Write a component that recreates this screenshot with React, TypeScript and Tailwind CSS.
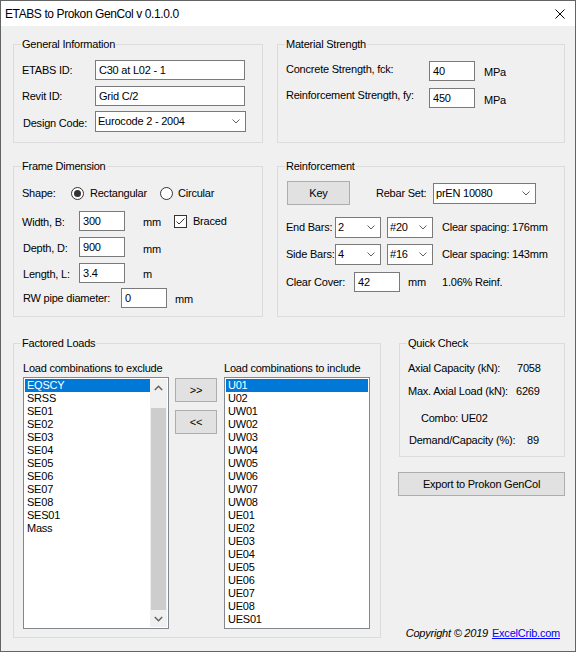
import React from 'react';

function Group({ title, className, children }: { title: string; className: string; children?: React.ReactNode }) {
  return (
    <div className={`relative border border-[#dcdcdc] shrink-0 ${className}`}>
      <span className="absolute -top-[8px] left-[7px] px-[1px] bg-[#f0f0f0] leading-[14px] whitespace-nowrap">{title}</span>
      {children}
    </div>
  );
}

function TextBox({ cls, value }: { cls: string; value: string }) {
  return (
    <div className={`${cls} h-[20px] border border-[#7a7a7a] bg-white pl-[3px] leading-[18px] shrink-0 whitespace-nowrap`}>{value}</div>
  );
}

function Chevron() {
  return (
    <svg width="8" height="5" viewBox="0 0 8 5" className="shrink-0">
      <path d="M0.5 0.5 L4 4 L7.5 0.5" stroke="#606060" strokeWidth="1" fill="none" />
    </svg>
  );
}

function Combo({ cls, value }: { cls: string; value: string }) {
  return (
    <div className={`${cls} h-[21px] border border-[#7a7a7a] bg-white pl-[2px] pr-[5px] flex items-center justify-between shrink-0`}>
      <span className="whitespace-nowrap">{value}</span>
      <Chevron />
    </div>
  );
}

function Btn({ cls, children }: { cls: string; children: React.ReactNode }) {
  return (
    <div className={`${cls} border border-[#adadad] bg-[#e1e1e1] flex items-center justify-center shrink-0 whitespace-nowrap`}>{children}</div>
  );
}

function Radio({ checked }: { checked?: boolean }) {
  return (
    <span className="w-[13px] h-[13px] rounded-full border border-[#333333] bg-white flex items-center justify-center shrink-0">
      {checked && <span className="w-[7px] h-[7px] rounded-full bg-[#333333]" />}
    </span>
  );
}

function Check() {
  return (
    <span className="w-[13px] h-[13px] border border-[#333333] bg-white flex items-center justify-center shrink-0">
      <svg width="11" height="11" viewBox="0 0 11 11">
        <path d="M1.5 5.5 L4 8 L9.5 2.5" stroke="#333333" strokeWidth="1" fill="none" />
      </svg>
    </span>
  );
}

function ListBox({ items, scroll }: { items: string[]; scroll?: boolean }) {
  return (
    <div className="h-[252px] border border-[#828790] bg-white p-[1px] flex">
      <div className="flex-1 flex flex-col overflow-hidden">
        {items.map((it, i) => (
          <div
            key={it}
            className={`h-[13px] leading-[13px] pl-[2px] whitespace-nowrap shrink-0 ${i === 0 ? 'bg-[#0078d7] text-white' : ''}`}
          >
            {it}
          </div>
        ))}
      </div>
      {scroll && (
        <div className="w-[17px] bg-[#f0f0f0] flex flex-col shrink-0">
          <div className="h-[17px] flex items-center justify-center shrink-0">
            <svg width="9" height="6" viewBox="0 0 9 6">
              <path d="M0.8 5 L4.5 1.2 L8.2 5" stroke="#606060" strokeWidth="1.4" fill="none" />
            </svg>
          </div>
          <div className="h-[12px] shrink-0" />
          <div className="mx-[1px] h-[202px] bg-[#cdcdcd] shrink-0" />
          <div className="flex-1" />
          <div className="h-[17px] flex items-center justify-center shrink-0">
            <svg width="9" height="6" viewBox="0 0 9 6">
              <path d="M0.8 1 L4.5 4.8 L8.2 1" stroke="#606060" strokeWidth="1.4" fill="none" />
            </svg>
          </div>
        </div>
      )}
    </div>
  );
}

const leftItems = ['EQSCY', 'SRSS', 'SE01', 'SE02', 'SE03', 'SE04', 'SE05', 'SE06', 'SE07', 'SE08', 'SES01', 'Mass'];
const rightItems = [
  'U01', 'U02', 'UW01', 'UW02', 'UW03', 'UW04', 'UW05', 'UW06', 'UW07', 'UW08',
  'UE01', 'UE02', 'UE03', 'UE04', 'UE05', 'UE06', 'UE07', 'UE08', 'UES01',
];

export default function App() {
  return (
    <div className="w-[576px] h-[652px] border border-[#646464] bg-[#f0f0f0] flex flex-col overflow-hidden text-[11px] tracking-[-0.22px] whitespace-nowrap text-black font-['Liberation_Sans',Arial,sans-serif]">
      <div className="h-[25px] bg-white flex items-center justify-between pl-[4px] pr-[10px] shrink-0">
        <span className="text-[12px] tracking-[-0.4px] leading-[16px]">ETABS to Prokon GenCol v 0.1.0.0</span>
        <svg width="10" height="10" viewBox="0 0 10 10">
          <path d="M0.5 0.5 L9.5 9.5 M9.5 0.5 L0.5 9.5" stroke="#000" strokeWidth="1" />
        </svg>
      </div>

      <div className="pl-[12px] pt-[18px]">
        {/* Row 1 */}
        <div className="flex gap-[14px]">
          <Group title="General Information" className="w-[250px] h-[99px] pl-[8px] pt-[15px]">
            <div className="flex items-center h-[20px]">
              <span className="w-[73px] shrink-0">ETABS ID:</span>
              <TextBox cls="w-[150px]" value="C30 at L02 - 1" />
            </div>
            <div className="flex items-center h-[20px] mt-[6px]">
              <span className="w-[73px] shrink-0">Revit ID:</span>
              <TextBox cls="w-[150px]" value="Grid C/2" />
            </div>
            <div className="flex items-center h-[21px] mt-[5px]">
              <span className="w-[73px] shrink-0 pl-[1px] mt-[3px]">Design Code:</span>
              <Combo cls="w-[151px]" value="Eurocode 2 - 2004" />
            </div>
          </Group>
          <Group title="Material Strength" className="w-[288px] h-[99px] pl-[8px] pt-[16px]">
            <div className="flex items-center h-[20px]">
              <span className="w-[143px] shrink-0 -mt-[4px]">Concrete Strength, fck:</span>
              <TextBox cls="w-[46px]" value="40" />
              <span className="ml-[9px] mt-[2px]">MPa</span>
            </div>
            <div className="flex items-center h-[20px] mt-[7px]">
              <span className="w-[143px] shrink-0 -mt-[6px]">Reinforcement Strength, fy:</span>
              <TextBox cls="w-[46px]" value="450" />
              <span className="ml-[9px] mt-[4px]">MPa</span>
            </div>
          </Group>
        </div>

        {/* Row 2 */}
        <div className="flex gap-[14px] mt-[23px]">
          <Group title="Frame Dimension" className="w-[250px] h-[151px] pl-[8px] pt-[16px]">
            <div className="flex items-center h-[20px]">
              <span className="w-[49px] shrink-0">Shape:</span>
              <div className="w-[89px] shrink-0 flex items-center">
                <Radio checked />
                <span className="ml-[6px]">Rectangular</span>
              </div>
              <div className="flex items-center">
                <Radio />
                <span className="ml-[5px]">Circular</span>
              </div>
            </div>
            <div className="flex items-center h-[20px] mt-[8px]">
              <span className="w-[57px] shrink-0 mt-[2px]">Width, B:</span>
              <TextBox cls="w-[46px]" value="300" />
              <span className="ml-[18px] w-[31px] shrink-0 mt-[2px]">mm</span>
              <Check />
              <span className="ml-[6px]">Braced</span>
            </div>
            <div className="flex items-center h-[20px] mt-[6px]">
              <span className="w-[57px] shrink-0 pl-[1px] mt-[3px]">Depth, D:</span>
              <TextBox cls="w-[46px]" value="900" />
              <span className="ml-[18px] mt-[4px]">mm</span>
            </div>
            <div className="flex items-center h-[20px] mt-[6px]">
              <span className="w-[57px] shrink-0 pl-[1px] mt-[3px]">Length, L:</span>
              <TextBox cls="w-[46px]" value="3.4" />
              <span className="ml-[18px] mt-[3px]">m</span>
            </div>
            <div className="flex items-center h-[20px] mt-[5px]">
              <span className="w-[99px] shrink-0 pl-[1px] mt-[1px]">RW pipe diameter:</span>
              <TextBox cls="w-[46px]" value="0" />
              <span className="ml-[8px] mt-[2px]">mm</span>
            </div>
          </Group>
          <Group title="Reinforcement" className="w-[288px] h-[151px] pl-[8px] pt-[14px]">
            <div className="flex items-center">
              <Btn cls="ml-[1px] w-[63px] h-[24px]">Key</Btn>
              <span className="ml-[26px] w-[57px] shrink-0">Rebar Set:</span>
              <Combo cls="w-[103px]" value="prEN 10080" />
            </div>
            <div className="flex items-center h-[21px] mt-[12px]">
              <span className="w-[49px] shrink-0">End Bars:</span>
              <Combo cls="w-[46px]" value="2" />
              <Combo cls="w-[46px] ml-[6px]" value="#20" />
              <span className="ml-[9px]">Clear spacing: 176mm</span>
            </div>
            <div className="flex items-center h-[21px] mt-[6px]">
              <span className="w-[49px] shrink-0">Side Bars:</span>
              <Combo cls="w-[46px]" value="4" />
              <Combo cls="w-[46px] ml-[6px]" value="#16" />
              <span className="ml-[9px]">Clear spacing: 143mm</span>
            </div>
            <div className="flex items-center h-[20px] mt-[7px]">
              <span className="w-[68px] shrink-0">Clear Cover:</span>
              <TextBox cls="w-[46px]" value="42" />
              <span className="ml-[8px] w-[34px] shrink-0">mm</span>
              <span>1.06% Reinf.</span>
            </div>
          </Group>
        </div>

        {/* Row 3 */}
        <div className="flex mt-[26px]">
          <Group title="Factored Loads" className="w-[368px] h-[295px] pl-[9px] pt-[17px]">
            <div className="flex">
              <div className="w-[146px] shrink-0">
                <div className="leading-[14px]">Load combinations to exclude</div>
                <div className="mt-[2px]">
                  <ListBox items={leftItems} scroll />
                </div>
              </div>
              <div className="w-[55px] pl-[6px] pt-[17px] flex flex-col shrink-0">
                <Btn cls="w-[42px] h-[24px]">&gt;&gt;</Btn>
                <Btn cls="w-[42px] h-[24px] mt-[8px]">&lt;&lt;</Btn>
              </div>
              <div className="w-[146px] shrink-0">
                <div className="leading-[14px]">Load combinations to include</div>
                <div className="mt-[2px]">
                  <ListBox items={rightItems} />
                </div>
              </div>
            </div>
          </Group>
          <div className="ml-[18px] flex flex-col w-[166px] shrink-0">
            <Group title="Quick Check" className="w-[166px] h-[114px] pl-[8px] pt-[17px]">
              <div className="flex leading-[14px]">
                <span className="w-[109px] shrink-0">Axial Capacity (kN):</span>
                <span>7058</span>
              </div>
              <div className="flex leading-[14px] mt-[9px]">
                <span className="w-[108px] shrink-0">Max. Axial Load (kN):</span>
                <span>6269</span>
              </div>
              <div className="leading-[14px] mt-[13px] pl-[13px]">Combo: UE02</div>
              <div className="flex leading-[14px] mt-[8px] pl-[1px]">
                <span className="w-[118px] shrink-0">Demand/Capacity (%):</span>
                <span>89</span>
              </div>
            </Group>
            <Btn cls="mt-[15px] h-[24px] w-[167px] -ml-[1px]">Export to Prokon GenCol</Btn>
            <div className="mt-[130px] leading-[14px] flex justify-end pr-[5px]">
              <span className="italic">Copyright © 2019</span>
              <span className="ml-[4px] text-[#0000ff] underline">ExcelCrib.com</span>
            </div>
          </div>
        </div>
      </div>
    </div>
  );
}
